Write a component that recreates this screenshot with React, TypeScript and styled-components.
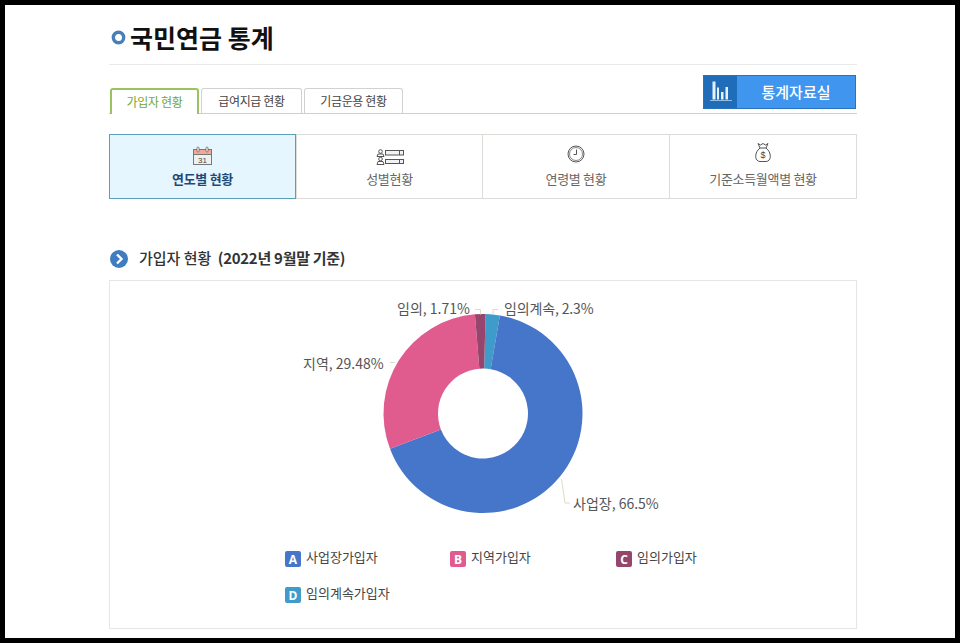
import styled, { createGlobalStyle } from "styled-components";

const GlobalStyle = createGlobalStyle`
  html, body {
    margin: 0;
    padding: 0;
    background: #000;
  }
  * {
    box-sizing: border-box;
  }
`;

const KR = `"Noto Sans CJK KR", "Noto Sans", sans-serif`;

const Page = styled.div`
  margin: 5px;
  width: 950px;
  height: 633px;
  padding: 0 98px 0 104px;
  background: #fff;
  overflow: hidden;
  font-family: ${KR};
`;

const TitleRow = styled.div`
  height: 60px;
  display: flex;
  align-items: center;
  gap: 4px;
  padding: 5px 0 0 2px;
  border-bottom: 1px solid #e8e8e8;
`;

const TitleText = styled.h1`
  margin: 0;
  font-size: 25px;
  font-weight: 700;
  color: #111;
  line-height: 1;
`;

const TabRow = styled.div`
  height: 49px;
  display: flex;
  justify-content: space-between;
  align-items: flex-end;
  padding: 0 1px 0 1px;
  border-bottom: 1px solid #cfcfcf;
`;

const Tabs = styled.div`
  display: flex;
  gap: 2px;
`;

const Tab = styled.div<{ $active?: boolean; $width: number }>`
  width: ${(p) => p.$width}px;
  height: 26px;
  margin-bottom: -1px;
  padding-bottom: 1px;
  display: flex;
  align-items: center;
  justify-content: center;
  font-size: 12px;
  letter-spacing: -0.35px;
  color: ${(p) => (p.$active ? "#6fa832" : "#444")};
  background: #fff;
  border: ${(p) => (p.$active ? "2px solid #9bc260" : "1px solid #d2d2d2")};
  border-bottom: ${(p) => (p.$active ? "none" : "1px solid #cfcfcf")};
  border-radius: 3px 3px 0 0;
`;

const DataButton = styled.div`
  width: 153px;
  height: 34px;
  margin-bottom: 4px;
  display: flex;
  background: #4096ee;
  border: 1px solid #2a72bd;
`;

const DataIcon = styled.div`
  width: 33px;
  background: #1f6db8;
  display: flex;
  align-items: center;
  justify-content: center;
`;

const DataLabel = styled.div`
  flex: 1;
  display: flex;
  align-items: center;
  justify-content: center;
  color: #fff;
  font-size: 15px;
  font-weight: 500;
  padding-bottom: 1px;
`;

const Cards = styled.div`
  margin-top: 20px;
  height: 65px;
  display: grid;
  grid-template-columns: 186px 186px 187px 187px;
  border: 1px solid #dcdcd8;
`;

const Card = styled.div<{ $active?: boolean }>`
  display: flex;
  flex-direction: column;
  align-items: center;
  padding-top: 10px;
  margin: ${(p) => (p.$active ? "-1px 0 -1px -1px" : "0")};
  border: ${(p) => (p.$active ? "1px solid #5b9fb8" : "none")};
  border-left: ${(p) => (p.$active ? "1px solid #5b9fb8" : "1px solid #dcdcd8")};
  background: ${(p) => (p.$active ? "#e6f6fe" : "#fff")};
`;

const CardIcon = styled.div<{ $top?: number; $bottom?: number }>`
  height: 22px;
  padding: ${(p) => p.$top ?? 0}px 0 ${(p) => p.$bottom ?? 0}px;
  display: flex;
  align-items: center;
  justify-content: center;
`;

const CardLabel = styled.div<{ $active?: boolean }>`
  margin-top: 2px;
  font-size: 13px;
  line-height: 19px;
  letter-spacing: -0.3px;
  font-weight: ${(p) => (p.$active ? 700 : 400)};
  color: ${(p) => (p.$active ? "#1f4a78" : "#666")};
`;

const SectionHead = styled.div`
  margin-top: 50px;
  height: 20px;
  display: flex;
  align-items: center;
  gap: 11px;
  padding-left: 1px;
`;

const SectionText = styled.div`
  font-size: 15px;
  line-height: 18px;
  font-weight: 500;
  color: #333;
  padding-bottom: 2px;
  strong {
    margin-left: 3px;
    font-weight: 700;
    letter-spacing: -0.28px;
  }
`;

const ChartBox = styled.div`
  margin-top: 11px;
  height: 349px;
  border: 1px solid #e6e6e6;
`;

const ChartSvg = styled.svg`
  display: block;
  font-family: ${KR};
`;

const Legend = styled.div`
  display: grid;
  grid-template-columns: 165px 166px 166px;
  grid-auto-rows: 36px;
  padding: 13px 0 0 175px;
`;

const LegendItem = styled.div`
  display: flex;
  align-items: flex-start;
  gap: 5px;
`;

const Badge = styled.span<{ $color: string }>`
  width: 16px;
  height: 16px;
  margin-top: 1px;
  display: flex;
  align-items: center;
  justify-content: center;
  border-radius: 2px;
  background: ${(p) => p.$color};
  color: #fff;
  font: 700 12px "Open Sans", sans-serif;
`;

const LegendText = styled.span`
  font-size: 13px;
  line-height: 14px;
  color: #444;
`;

const CX = 373;
const CY = 132.5;
const R1 = 99.5;
const R2 = 45;

const slices = [
  { value: 2.3, color: "#3f9bc9" },
  { value: 66.5, color: "#4676c9" },
  { value: 29.48, color: "#e05c8e" },
  { value: 1.71, color: "#96466c" },
];

const point = (r: number, deg: number) => {
  const a = ((deg - 90) * Math.PI) / 180;
  return `${(CX + r * Math.cos(a)).toFixed(2)} ${(CY + r * Math.sin(a)).toFixed(2)}`;
};

const slicePath = (from: number, to: number) => {
  const large = to - from > 180 ? 1 : 0;
  return `M${point(R1, from)}A${R1} ${R1} 0 ${large} 1 ${point(R1, to)}L${point(R2, to)}A${R2} ${R2} 0 ${large} 0 ${point(R2, from)}Z`;
};

const total = slices.reduce((sum, s) => sum + s.value, 0);

const Donut = () => {
  let angle = 1.5;
  return (
    <ChartSvg width={746} height={256} viewBox="0 0 746 256">
      {slices.map((s) => {
        const from = angle;
        angle += (s.value / total) * 360;
        return <path key={s.color} d={slicePath(from, angle)} fill={s.color} />;
      })}
      <g fill="none" stroke="#dcdcc8">
        <path d="M365 28.500h5.500v5" />
        <path d="M388 28.500h-5v5" />
        <path d="M280 81.500h5" />
        <path d="M451.500 198l3.500 24h5" />
      </g>
      <g fontSize={14} fill="#555">
        <text x={287} y={33}>임의, 1.71%</text>
        <text x={394} y={33} letterSpacing={-0.15}>임의계속, 2.3%</text>
        <text x={193} y={88}>지역, 29.48%</text>
        <text x={463} y={228}>사업장, 66.5%</text>
      </g>
    </ChartSvg>
  );
};

const legendItems = [
  { letter: "A", label: "사업장가입자", color: "#4676c9" },
  { letter: "B", label: "지역가입자", color: "#e05c8e" },
  { letter: "C", label: "임의가입자", color: "#96466c" },
  { letter: "D", label: "임의계속가입자", color: "#3f9bc9" },
];

const cards = [
  {
    label: "연도별 현황",
    active: true,
    top: 0,
    bottom: 0,
    icon: (
      <svg width="21" height="20" viewBox="0 0 21 20">
        <rect x="1.500" y="3.500" width="18" height="15" fill="#eef1f2" stroke="#777" />
        <rect x="1.500" y="3.500" width="18" height="5" fill="#f4a893" stroke="#777" />
        <rect x="5" y="1" width="2" height="5" rx="1" fill="#fff" stroke="#666" strokeWidth="0.8" />
        <rect x="14" y="1" width="2" height="5" rx="1" fill="#fff" stroke="#666" strokeWidth="0.8" />
        <text x="10.500" y="16.500" fontSize="8" textAnchor="middle" fill="#444" fontFamily="Liberation Sans">31</text>
      </svg>
    ),
  },
  {
    label: "성별현황",
    top: 2,
    bottom: 0,
    icon: (
      <svg width="28" height="16" viewBox="0 0 28 16" fill="none" stroke="#555">
        <circle cx="4.500" cy="2.500" r="1.800" />
        <path d="M1 7.500l1-2.500h5l1 2.500z" />
        <circle cx="4.500" cy="10" r="1.800" />
        <path d="M1 15.500l1-3h5l1 3z" />
        <rect x="9.500" y="1.500" width="18" height="4.500" fill="#f2f2f2" />
        <rect x="9.500" y="10.500" width="18" height="4" fill="#f2f2f2" />
        <path d="M23.500 1.500v4.500M23.500 10.500v4" />
      </svg>
    ),
  },
  {
    label: "연령별 현황",
    top: 0,
    bottom: 4,
    icon: (
      <svg width="18" height="18" viewBox="0 0 18 18" fill="none" stroke="#555">
        <circle cx="9" cy="9" r="8" />
        <circle cx="9" cy="9" r="6.500" strokeWidth="0.7" />
        <path d="M9.500 4.500v5h-3" />
      </svg>
    ),
  },
  {
    label: "기준소득월액별 현황",
    top: 0,
    bottom: 8,
    icon: (
      <svg width="16" height="19" viewBox="0 0 16 19" fill="none" stroke="#555">
        <path d="M3 .5l2.500 1.500L8 .5l2.500 1.500L13 .5l-2 4.500H5z" />
        <path d="M5 5C2 7.500.7 10 .7 13.500c0 3 2 5 4.300 5h6c2.300 0 4.300-2 4.300-5C15.300 10 14 7.500 11 5" />
        <text x="8" y="15" fontSize="9" textAnchor="middle" fill="#444" stroke="none" fontFamily="Liberation Sans">$</text>
      </svg>
    ),
  },
];

export default function App() {
  return (
    <>
      <GlobalStyle />
      <Page>
        <TitleRow>
          <svg width="15" height="15" viewBox="0 0 15 15">
            <circle cx="7.500" cy="7.500" r="5.200" fill="none" stroke="#4a7fb5" strokeWidth="3.400" />
          </svg>
          <TitleText>국민연금 통계</TitleText>
        </TitleRow>
        <TabRow>
          <Tabs>
            <Tab $active $width={89}>가입자 현황</Tab>
            <Tab $width={101}>급여지급 현황</Tab>
            <Tab $width={99}>기금운용 현황</Tab>
          </Tabs>
          <DataButton>
            <DataIcon>
              <svg width="22" height="22" viewBox="0 0 22 22" fill="#e6f0fa">
                <rect x="2.500" y="0.500" width="3" height="18" />
                <rect x="7" y="6.500" width="2" height="12" />
                <rect x="11" y="11" width="2.500" height="7.500" />
                <rect x="15.500" y="6" width="2.500" height="12.500" />
                <rect x="0" y="19" width="22" height="1" opacity="0.6" />
              </svg>
            </DataIcon>
            <DataLabel>통계자료실</DataLabel>
          </DataButton>
        </TabRow>
        <Cards>
          {cards.map((c) => (
            <Card key={c.label} $active={c.active}>
              <CardIcon $top={c.top} $bottom={c.bottom}>{c.icon}</CardIcon>
              <CardLabel $active={c.active}>{c.label}</CardLabel>
            </Card>
          ))}
        </Cards>
        <SectionHead>
          <svg width="18" height="18" viewBox="0 0 18 18">
            <circle cx="9" cy="9" r="9" fill="#3f7cc0" />
            <path d="M7 4.500l4.500 4.500L7 13.500" fill="none" stroke="#fff" strokeWidth="2.400" />
          </svg>
          <SectionText>
            가입자 현황 <strong>(2022년 9월말 기준)</strong>
          </SectionText>
        </SectionHead>
        <ChartBox>
          <Donut />
          <Legend>
            {legendItems.map((item) => (
              <LegendItem key={item.letter}>
                <Badge $color={item.color}>{item.letter}</Badge>
                <LegendText>{item.label}</LegendText>
              </LegendItem>
            ))}
          </Legend>
        </ChartBox>
      </Page>
    </>
  );
}
